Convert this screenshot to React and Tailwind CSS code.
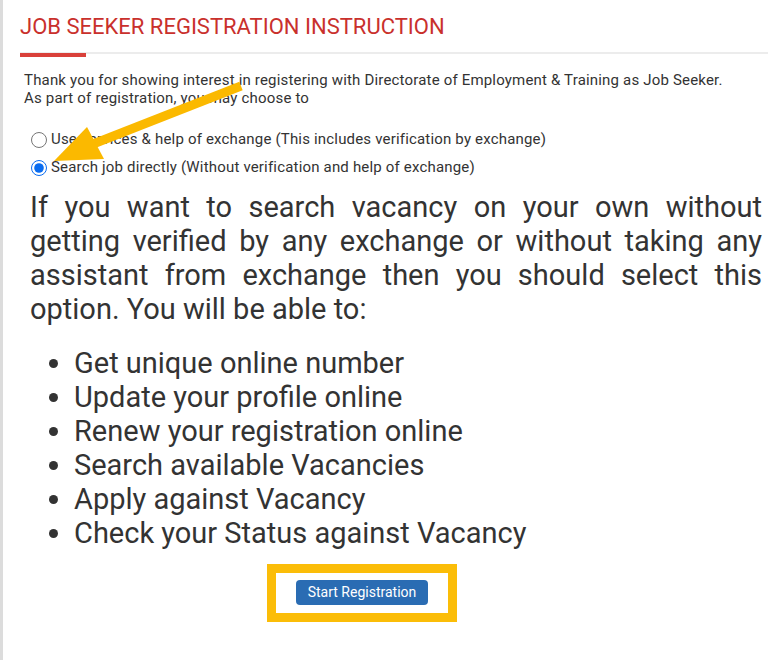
export default function App() {
  const perks = [
    "Get unique online number",
    "Update your profile online",
    "Renew your registration online",
    "Search available Vacancies",
    "Apply against Vacancy",
    "Check your Status against Vacancy",
  ];

  return (
    <div className="relative w-[776px] h-[660px] bg-white overflow-hidden font-['Roboto',sans-serif] text-[#333]">
      <div className="h-full border-l-[3px] border-[#dcdcdc] pl-[17px] pr-[8px]">
        <h1 className="pt-[14px] pb-[12px] text-[22px] leading-[26px] text-[#c9302c] uppercase">
          Job Seeker Registration Instruction
        </h1>
        <div className="relative h-[2px] bg-[#ececec]">
          <div className="absolute left-0 top-[1px] h-[4px] w-[66px] bg-[#d9403a]" />
        </div>

        <div className="pl-[4px] pt-[17px]">
          <p className="text-[15px] tracking-[0.18px] leading-[18px] text-[#333]">
            Thank you for showing interest in registering with Directorate of Employment &amp; Training as Job Seeker.
            <br />
            As part of registration, you may choose to
          </p>

          <div className="mt-[18px] pl-[7px] text-[15px] tracking-[0.18px] leading-[29px]">
            <label className="flex items-center gap-[4px]">
              <input type="radio" name="mode" className="w-[16px] h-[16px] m-0" />
              <span>Use services &amp; help of exchange (This includes verification by exchange)</span>
            </label>
            <label className="flex items-center gap-[4px] -mt-[1px]">
              <input type="radio" name="mode" defaultChecked className="w-[16px] h-[16px] m-0 accent-[#0a6cf0]" />
              <span>Search job directly (Without verification and help of exchange)</span>
            </label>
          </div>

          <p className="mt-[8px] pl-[6px] pr-[6px] text-[29px] leading-[34px] text-justify">
            If you want to search vacancy on your own without getting verified by any exchange or without taking any
            assistant from exchange then you should select this option. You will be able to:
          </p>

          <ul className="mt-[20px] pl-[50px] list-disc text-[29px] leading-[34px]">
            {perks.map((p) => (
              <li key={p}>{p}</li>
            ))}
          </ul>

          <div className="mt-[14px] pl-[243px]">
            <div className="inline-block border-[9px] border-[#fbbd08] px-[20px] pt-[7px] pb-[8px]">
              <button className="block rounded-[4px] bg-[#2a6cb3] w-[132px] h-[25px] text-[14px] text-white">
                Start Registration
              </button>
            </div>
          </div>
        </div>
      </div>

      <svg className="absolute left-0 top-0 pointer-events-none" width="776" height="660">
        <line x1="241" y1="86" x2="88" y2="146" stroke="#fbb900" strokeWidth="9" />
        <polygon points="87,127 104,159 54,161" fill="#fbb900" />
      </svg>
    </div>
  );
}
